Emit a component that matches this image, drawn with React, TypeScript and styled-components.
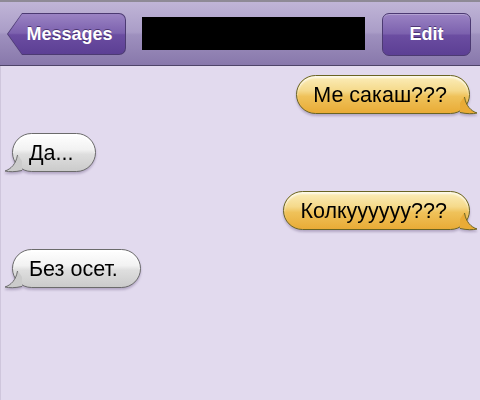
import React from "react";
import styled, { createGlobalStyle, css } from "styled-components";

const Global = createGlobalStyle`
  html, body { margin: 0; padding: 0; }
  body {
    width: 480px;
    height: 400px;
    overflow: hidden;
    background: #e2daee;
    font-family: "Liberation Sans", Arial, Helvetica, sans-serif;
  }
`;

const Screen = styled.div`
  width: 480px;
  height: 400px;
  display: flex;
  flex-direction: column;
  background: #e2daee;
  border-left: 1px solid #cfc6dc;
  box-sizing: border-box;
`;

const NavBar = styled.div`
  height: 66px;
  box-sizing: border-box;
  border-top: 2px solid #8e8a96;
  border-bottom: 1px solid #4e4468;
  background: linear-gradient(180deg, #c0b5d7 0%, #aa9dc7 48%, #9e90be 52%, #8878ab 100%);
  display: flex;
  align-items: center;
  padding: 1px 8px 0 7px;
  margin-left: -1px;
`;

const BackButton = styled.div`
  width: 119px;
  height: 42px;
  box-sizing: border-box;
  padding: 1px;
  display: flex;
  background: #4c3a72;
  border-radius: 0 7px 7px 0;
  clip-path: polygon(15px 0, 100% 0, 100% 100%, 15px 100%, 0 50%);
`;

const BackInner = styled.div`
  flex: 1;
  display: flex;
  align-items: center;
  justify-content: center;
  padding-left: 6px;
  border-radius: 0 6px 6px 0;
  clip-path: polygon(14px 0, 100% 0, 100% 100%, 14px 100%, 0 50%);
  background: linear-gradient(180deg, #9a83c3 0%, #7c61ae 48%, #6b4da1 52%, #5c3f94 100%);
  color: #fff;
  font-weight: bold;
  font-size: 18px;
  text-shadow: 0 -1px 0 rgba(40, 20, 70, 0.6);
`;

const TitleBlock = styled.div`
  width: 223px;
  height: 33px;
  background: #000;
  margin-left: 16px;
  margin-right: 17px;
  margin-top: -2px;
`;

const EditButton = styled.div`
  width: 89px;
  height: 43px;
  box-sizing: border-box;
  border: 1px solid #4c3a72;
  border-radius: 7px;
  display: flex;
  align-items: center;
  justify-content: center;
  background: linear-gradient(180deg, #9a83c3 0%, #7c61ae 48%, #6b4da1 52%, #5c3f94 100%);
  color: #fff;
  font-weight: bold;
  font-size: 18px;
  text-shadow: 0 -1px 0 rgba(40, 20, 70, 0.6);
  box-shadow: inset 0 1px 0 rgba(255, 255, 255, 0.25);
`;

const Thread = styled.div`
  display: flex;
  flex-direction: column;
  gap: 19px;
  padding: 9px 10px 0 11px;
`;

type Side = "left" | "right";

const Row = styled.div<{ $side: Side }>`
  display: flex;
  justify-content: ${(p) => (p.$side === "right" ? "flex-end" : "flex-start")};
`;

const tones = {
  orange: css`
    border-color: #6a6422;
    background: linear-gradient(180deg, #fbeebb 0%, #f5d98a 40%, #efc25a 55%, #e9ab36 100%);
  `,
  gray: css`
    border-color: #6b6b6b;
    background: linear-gradient(180deg, #ffffff 0%, #f2f2f2 42%, #dedede 55%, #cbcbcb 100%);
  `,
};

type Tone = keyof typeof tones;

const Bubble = styled.div<{ $tone: Tone; $side: Side }>`
  position: relative;
  height: 39px;
  box-sizing: border-box;
  border: 1px solid;
  border-radius: 20px;
  display: flex;
  align-items: center;
  padding: 1px 22px 0 16px;
  font-size: 21.5px;
  color: #000;
  filter: drop-shadow(0 2px 1px rgba(60, 40, 90, 0.28));
  ${(p) => tones[p.$tone]}
  box-shadow: inset 0 2px 2px rgba(255, 255, 255, 0.7);
`;

const TailSvg = styled.svg<{ $side: Side }>`
  position: absolute;
  bottom: -2px;
  width: 20px;
  height: 18px;
  overflow: visible;
  ${(p) =>
    p.$side === "right"
      ? css`
          right: -10px;
        `
      : css`
          left: -10px;
          transform: scaleX(-1);
        `}
`;

const tailColors: Record<Tone, { fill: string; stroke: string }> = {
  orange: { fill: "#e9ab36", stroke: "#6a6422" },
  gray: { fill: "#cbcbcb", stroke: "#6b6b6b" },
};

function Tail({ side, tone }: { side: Side; tone: Tone }) {
  const c = tailColors[tone];
  return (
    <TailSvg $side={side} viewBox="0 0 20 18">
      <path d="M5,0 C7,9 12,14 18,16 C14,17 8,17 1,15 L1,6 Z" fill={c.fill} />
      <path
        d="M5.5,0 C7,9 12,14 18,16 C14,17 8,17 1,15.5"
        fill="none"
        stroke={c.stroke}
        strokeWidth="1"
      />
    </TailSvg>
  );
}

const messages: { side: Side; tone: Tone; text: string }[] = [
  { side: "right", tone: "orange", text: "Ме сакаш???" },
  { side: "left", tone: "gray", text: "Да..." },
  { side: "right", tone: "orange", text: "Колкуууууу???" },
  { side: "left", tone: "gray", text: "Без осет." },
];

export default function App() {
  return (
    <>
      <Global />
      <Screen>
        <NavBar>
          <BackButton>
            <BackInner>Messages</BackInner>
          </BackButton>
          <TitleBlock />
          <EditButton>Edit</EditButton>
        </NavBar>
        <Thread>
          {messages.map((m, i) => (
            <Row key={i} $side={m.side}>
              <Bubble $tone={m.tone} $side={m.side}>
                {m.text}
                <Tail side={m.side} tone={m.tone} />
              </Bubble>
            </Row>
          ))}
        </Thread>
      </Screen>
    </>
  );
}
